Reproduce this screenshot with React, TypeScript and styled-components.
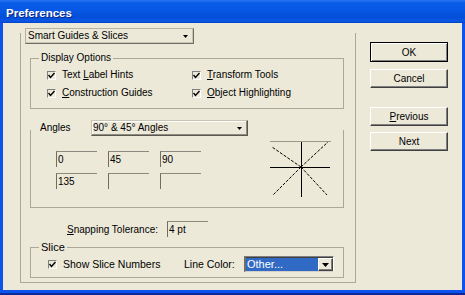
import React from "react";
import styled, { createGlobalStyle } from "styled-components";

const GlobalStyle = createGlobalStyle`
  html, body { margin: 0; padding: 0; background: #0c52ec; }
  body {
    width: 465px; height: 295px; overflow: hidden;
    font-family: "Liberation Sans", Arial, sans-serif;
    font-size: 10px; color: #000;
  }
  * { box-sizing: border-box; }
`;

const Window = styled.div`
  width: 465px;
  height: 295px;
  display: flex;
  flex-direction: column;
`;

const TitleBar = styled.div`
  height: 23px;
  flex: none;
  display: flex;
  align-items: center;
  padding: 2px 0 0 6px;
  background: linear-gradient(
    to bottom,
    #2a74f2 0px,
    #0a5ce8 3px,
    #0656e2 12px,
    #044ed8 17px,
    #0a58e4 21px,
    #0040c8 23px
  );
  color: #fff;
  font-weight: bold;
  font-size: 11.5px;
  text-shadow: 1px 1px #0a2488;
`;

const Frame = styled.div`
  flex: 1;
  display: flex;
  padding: 0 3px 5px;
  background: linear-gradient(to bottom, #0c52ec calc(100% - 2px), #0a2a9c calc(100% - 2px));
`;

const Client = styled.div`
  flex: 1;
  display: flex;
  align-items: flex-start;
  background: #ece9d8;
`;

const Panel = styled.div`
  margin: 10px 0 0 17px;
  width: 336px;
  height: 250px;
  border: 1px solid #aca899;
  border-top: none;
  display: flex;
  flex-direction: column;
  align-items: flex-start;
`;

const Select = styled.div<{ $w: number; $h?: number }>`
  width: ${(p) => p.$w}px;
  height: ${(p) => p.$h ?? 16}px;
  display: flex;
  align-items: center;
  justify-content: space-between;
  padding: 0 5px 0 2px;
  border: 1px solid;
  border-color: #b5b3a6 #6f6d64 #6f6d64 #b5b3a6;
  box-shadow: inset -1px -1px #c9c6b6;
  background: #ece9d8;
  line-height: 12px;
  white-space: nowrap;
`;

const PresetSelect = styled(Select)`
  margin: -5px 0 0 4px;
`;

const Arrow = ({ w = 7, h = 4 }: { w?: number; h?: number }) => (
  <svg width={w} height={h} viewBox={`0 0 ${w} ${h}`}>
    <polygon points={`0,0 ${w},0 ${w / 2},${h}`} fill="#000" />
  </svg>
);

const GroupBox = styled.div<{ $top: number }>`
  position: relative;
  margin: ${(p) => p.$top}px 0 0 9px;
  width: 314px;
  border: 1px solid #aca899;
`;

const GroupLabel = styled.span<{ $size?: number }>`
  position: absolute;
  top: -7px;
  left: 8px;
  padding: 0 2px;
  background: #ece9d8;
  line-height: 12px;
  font-size: ${(p) => p.$size ?? 10}px;
`;

const CheckGrid = styled.div`
  display: grid;
  grid-template-columns: 145px 1fr;
  row-gap: 6px;
  padding: 10px 0 9px 16px;
`;

const CheckItem = styled.label<{ $w?: number }>`
  display: flex;
  align-items: center;
  gap: 6px;
  height: 12px;
  line-height: 12px;
  ${(p) => (p.$w ? `width: ${p.$w}px;` : "")}
`;

const Box = styled.span`
  width: 9px;
  height: 9px;
  flex: none;
  display: flex;
  align-items: center;
  justify-content: center;
  border-top: 1px solid #808080;
  border-left: 1px solid #808080;
  border-right: 1px solid #fff;
  border-bottom: 1px solid #fff;
`;

const Check = () => (
  <Box>
    <svg width="7" height="7" viewBox="0 0 7 7">
      <path d="M0.5 3 L2.5 5.5 L6.5 1" stroke="#000" strokeWidth="1.4" fill="none" />
    </svg>
  </Box>
);

const AnglesBox = styled.div`
  margin: 21px 0 0 9px;
  width: 314px;
  border: 1px solid #aca899;
  border-top: none;
`;

const AnglesHeader = styled.div`
  margin-top: -10px;
  display: flex;
  align-items: center;
  padding-left: 9px;
`;

const HeaderLabel = styled.span`
  width: 51px;
  line-height: 12px;
`;

const AnglesSelect = styled(Select)`
  border-color: #c7c4b4 #5a584f #5a584f #c7c4b4;
  box-shadow: inset -1px -1px #8e8c80, inset 1px 1px #fff;
  padding: 0 5px 0 1px;
`;

const AnglesBody = styled.div`
  display: flex;
  align-items: flex-start;
  margin-top: 5px;
  padding: 0 0 9px 25px;
`;

const FieldGrid = styled.div`
  margin-top: 10px;
  display: grid;
  grid-template-columns: repeat(3, 41px);
  column-gap: 11px;
  row-gap: 6px;
`;

const Field = styled.div<{ $w?: number }>`
  width: ${(p) => p.$w ?? 41}px;
  height: 16px;
  border-top: 1px solid #8c8a80;
  border-left: 1px solid #6f6d64;
  padding-left: 1px;
  line-height: 15px;
  white-space: nowrap;
`;

const StarWrap = styled.div`
  margin-left: 69px;
  width: 62px;
  height: 57px;
`;

const Star = () => (
  <StarWrap>
    <svg width="62" height="57" viewBox="0 0 62 57">
      <line x1="0" y1="0.5" x2="61" y2="0.5" stroke="#9a988c" strokeWidth="1" />
      <g stroke="#000" strokeWidth="1" strokeDasharray="3 1.5">
        <line x1="31" y1="26" x2="2" y2="6" />
        <line x1="31" y1="26" x2="58" y2="1" />
        <line x1="31" y1="26" x2="3" y2="54" />
        <line x1="31" y1="26" x2="57" y2="54" />
      </g>
      <line x1="0" y1="26.5" x2="60" y2="26.5" stroke="#000" strokeWidth="1" />
      <line x1="31.5" y1="1" x2="31.5" y2="56" stroke="#000" strokeWidth="1" />
    </svg>
  </StarWrap>
);

const SnapRow = styled.div`
  margin-top: 13px;
  display: flex;
  align-items: center;
  gap: 9px;
  padding-left: 46px;
`;

const SliceRow = styled.div`
  display: flex;
  align-items: center;
  padding: 8px 0 5px 17px;
  font-size: 10.5px;
`;

const ColorLabel = styled.span`
  width: 60px;
  line-height: 12px;
`;

const ColorSelect = styled.div`
  width: 90px;
  height: 16px;
  display: flex;
  border-top: 1px solid #808080;
  border-left: 2px solid #6f6d64;
  border-right: 1px solid #fff;
  border-bottom: 1px solid #d4d0c8;
  box-shadow: inset 0 1px #404040;
  padding-top: 1px;
`;

const Highlight = styled.span`
  flex: 1;
  background: #316ac5;
  color: #fff;
  padding-left: 1px;
  line-height: 13px;
  font-size: 11px;
`;

const DropButton = styled.span`
  width: 15px;
  display: flex;
  align-items: center;
  justify-content: center;
  background: #ece9d8;
  border: 1px solid;
  border-color: #fff #404040 #404040 #fff;
  box-shadow: inset -1px -1px #808080;
`;

const Buttons = styled.div`
  margin: 19px 0 0 14px;
  display: flex;
  flex-direction: column;
`;

const Button = styled.button<{ $gap?: number; $default?: boolean }>`
  width: 78px;
  height: ${(p) => (p.$default ? 20 : 19)}px;
  margin-top: ${(p) => p.$gap ?? 0}px;
  padding: 0;
  font: inherit;
  font-size: 10px;
  color: #000;
  background: #ece9d8;
  border: 1px solid;
  border-color: ${(p) => (p.$default ? "#000" : "#fff #404040 #404040 #fff")};
  box-shadow: ${(p) =>
    p.$default ? "inset 1px 1px #fff, inset -1px -1px #808080" : "inset -1px -1px #808080"};
  text-align: center;
`;

export default function App() {
  return (
    <>
      <GlobalStyle />
      <Window>
        <TitleBar>Preferences</TitleBar>
        <Frame>
          <Client>
            <Panel>
              <PresetSelect $w={169}>
                <span>Smart Guides &amp; Slices</span>
                <Arrow w={5} h={3} />
              </PresetSelect>

              <GroupBox $top={14}>
                <GroupLabel>Display Options</GroupLabel>
                <CheckGrid>
                  <CheckItem>
                    <Check />
                    <span>
                      Text <u>L</u>abel Hints
                    </span>
                  </CheckItem>
                  <CheckItem>
                    <Check />
                    <span>
                      <u>T</u>ransform Tools
                    </span>
                  </CheckItem>
                  <CheckItem>
                    <Check />
                    <span>
                      <u>C</u>onstruction Guides
                    </span>
                  </CheckItem>
                  <CheckItem>
                    <Check />
                    <span>
                      <u>O</u>bject Highlighting
                    </span>
                  </CheckItem>
                </CheckGrid>
              </GroupBox>

              <AnglesBox>
                <AnglesHeader>
                  <HeaderLabel>Angles</HeaderLabel>
                  <AnglesSelect $w={157}>
                    <span>90° &amp; 45° Angles</span>
                    <Arrow w={5} h={3} />
                  </AnglesSelect>
                </AnglesHeader>
                <AnglesBody>
                  <FieldGrid>
                    <Field>0</Field>
                    <Field>45</Field>
                    <Field>90</Field>
                    <Field>135</Field>
                    <Field />
                    <Field />
                  </FieldGrid>
                  <Star />
                </AnglesBody>
              </AnglesBox>

              <SnapRow>
                <span>
                  <u>S</u>napping Tolerance:
                </span>
                <Field>4 pt</Field>
              </SnapRow>

              <GroupBox $top={10}>
                <GroupLabel $size={11}>Slice</GroupLabel>
                <SliceRow>
                  <CheckItem $w={136}>
                    <Check />
                    <span>Show Slice Numbers</span>
                  </CheckItem>
                  <ColorLabel>Line Color:</ColorLabel>
                  <ColorSelect>
                    <Highlight>Other...</Highlight>
                    <DropButton>
                      <Arrow />
                    </DropButton>
                  </ColorSelect>
                </SliceRow>
              </GroupBox>
            </Panel>

            <Buttons>
              <Button $default>OK</Button>
              <Button $gap={7}>Cancel</Button>
              <Button $gap={19}>
                <u>P</u>revious
              </Button>
              <Button $gap={6}>Next</Button>
            </Buttons>
          </Client>
        </Frame>
      </Window>
    </>
  );
}
